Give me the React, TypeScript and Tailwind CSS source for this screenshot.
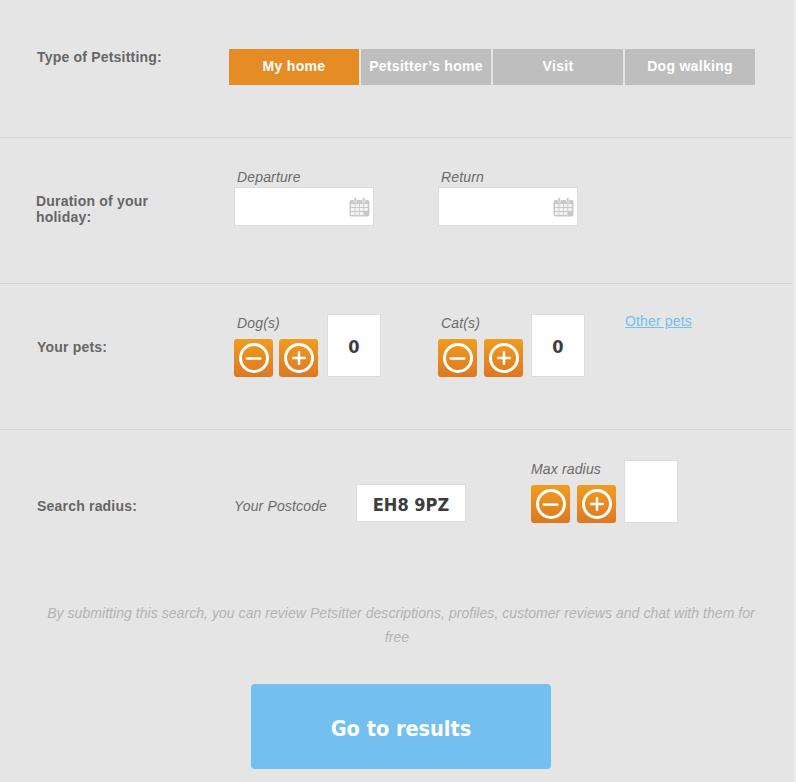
import { Minus, Plus } from 'lucide-react';

const sans = "font-['Liberation_Sans',Arial,sans-serif]";
const tahoma = "font-['DejaVu_Sans_Condensed','DejaVu_Sans',Tahoma,sans-serif]";
const rowLabel = 'text-sm font-bold leading-4 tracking-[0.2px] text-[#666]';
const fieldLabel = 'text-sm italic leading-[18px] tracking-[0.15px] text-[#6e6a6a]';

function CalendarIcon() {
  return (
    <svg width="21" height="20" viewBox="0 0 21 20" className="absolute right-[3px] top-[9px]">
      <rect x="0.5" y="3" width="20" height="16.5" rx="2" fill="#c8c8c8" />
      <rect x="5" y="0.5" width="2.5" height="5" rx="1.2" fill="#c8c8c8" stroke="#fff" strokeWidth="0.6" />
      <rect x="13.5" y="0.5" width="2.5" height="5" rx="1.2" fill="#c8c8c8" stroke="#fff" strokeWidth="0.6" />
      <g fill="#f2f2f2">
        <rect x="2" y="7" width="3.6" height="3" />
        <rect x="6.4" y="7" width="3.6" height="3" />
        <rect x="10.8" y="7" width="3.6" height="3" />
        <rect x="15.2" y="7" width="3.6" height="3" />
        <rect x="2" y="11" width="3.6" height="3" />
        <rect x="6.4" y="11" width="3.6" height="3" />
        <rect x="10.8" y="11" width="3.6" height="3" />
        <rect x="15.2" y="11" width="3.6" height="3" />
        <rect x="2" y="15" width="3.6" height="3" />
        <rect x="6.4" y="15" width="3.6" height="3" />
        <rect x="10.8" y="15" width="3.6" height="3" />
      </g>
    </svg>
  );
}

function RoundBtn({ plus }: { plus?: boolean }) {
  return (
    <button className="flex h-[38px] w-[39px] items-center justify-center rounded-[3px] bg-gradient-to-b from-[#f09c1f] to-[#dd7822]">
      <span className="flex h-[30px] w-[30px] items-center justify-center rounded-full border-[3px] border-white">
        {plus ? <Plus size={20} strokeWidth={3} color="#fff" /> : <Minus size={23} strokeWidth={2.8} color="#fff" />}
      </span>
    </button>
  );
}

function Counter({
  label,
  value,
  labelClass = 'pl-[3px]',
  gapClass = 'gap-[7px]',
}: {
  label: string;
  value?: string;
  labelClass?: string;
  gapClass?: string;
}) {
  return (
    <div className="flex items-end">
      <div className="w-[93px]">
        <div className={`mb-[7px] ${fieldLabel} ${labelClass}`}>{label}</div>
        <div className={`flex ${gapClass}`}>
          <RoundBtn />
          <RoundBtn plus />
        </div>
      </div>
      <div className={`flex h-[63px] w-[54px] items-center justify-center border border-[#dcdcdc] bg-white pt-[2px] text-[18px] font-bold text-[#3d3d3d] ${tahoma}`}>
        {value}
      </div>
    </div>
  );
}

function DateField({ label }: { label: string }) {
  return (
    <div className="w-[140px]">
      <div className={`mb-[1px] pl-[3px] ${fieldLabel}`}>{label}</div>
      <div className="relative h-[39px] border border-[#dcdcdc] bg-white">
        <CalendarIcon />
      </div>
    </div>
  );
}

export default function App() {
  const tabs = ['My home', 'Petsitter’s home', 'Visit', 'Dog walking'];
  return (
    <div className={`min-h-[782px] w-[796px] overflow-hidden bg-[#ebebeb] ${sans}`}>
      <div className="h-[782px] w-[793px] bg-[#e5e5e5]">
        <section className="flex h-[138px] border-b border-[#d6d6d6] pl-[37px] pt-[49px]">
          <div className={`w-[192px] ${rowLabel}`}>Type of Petsitting:</div>
          <div className="flex gap-[2px]">
            {tabs.map((tab, i) => (
              <div
                key={tab}
                className={`flex h-[36px] w-[130px] items-center justify-center pb-[2px] text-sm font-bold tracking-[0.3px] text-white ${i === 0 ? 'bg-[#e68c24]' : 'bg-[#bebebe]'}`}
              >
                {tab}
              </div>
            ))}
          </div>
        </section>

        <section className="flex h-[146px] border-b border-[#d6d6d6] pl-[36px] pt-[30px]">
          <div className="w-[198px] pt-[25px]">
            <div className={`w-[130px] ${rowLabel}`}>Duration of your holiday:</div>
          </div>
          <div className="flex gap-[64px]">
            <DateField label="Departure" />
            <DateField label="Return" />
          </div>
        </section>

        <section className="flex h-[146px] border-b border-[#d6d6d6] pl-[37px] pt-[30px]">
          <div className={`w-[197px] pt-[25px] ${rowLabel}`}>Your pets:</div>
          <div className="flex items-start">
            <Counter label="Dog(s)" value="0" gapClass="gap-[6px]" />
            <div className="ml-[57px]">
              <Counter label="Cat(s)" value="0" />
            </div>
            <a className="ml-[40px] mt-[-2px] text-sm leading-[18px] tracking-[0.15px] text-[#73c0f0] underline">Other pets</a>
          </div>
        </section>

        <section className="flex pl-[37px] pt-[30px]">
          <div className={`w-[197px] pt-[38px] ${rowLabel}`}>Search radius:</div>
          <div className="flex items-start">
            <div className="flex w-[297px] items-center pt-[24px]">
              <div className={`w-[122px] pt-[6px] ${fieldLabel}`}>Your Postcode</div>
              <div className={`flex h-[38px] w-[110px] items-center justify-center border border-[#dcdcdc] bg-white pt-[2px] text-[18px] font-bold text-[#3d3d3d] ${tahoma}`}>
                EH8 9PZ
              </div>
            </div>
            <Counter label="Max radius" labelClass="pl-0" />
          </div>
        </section>

        <p className="ml-[41px] mt-[78px] w-[720px] text-center text-sm italic leading-6 tracking-[0.05px] text-[#b3b3b3]">
          By submitting this search, you can review Petsitter descriptions, profiles, customer reviews and chat with them for
          <br />
          <span className="mr-[8px] inline-block">free</span>
        </p>

        <button className={`ml-[251px] mt-[35px] flex h-[85px] w-[300px] items-center justify-center rounded-[4px] bg-[#73c0f0] pt-[5px] text-[21.5px] font-bold text-white ${tahoma}`}>
          Go to results
        </button>
      </div>
    </div>
  );
}
